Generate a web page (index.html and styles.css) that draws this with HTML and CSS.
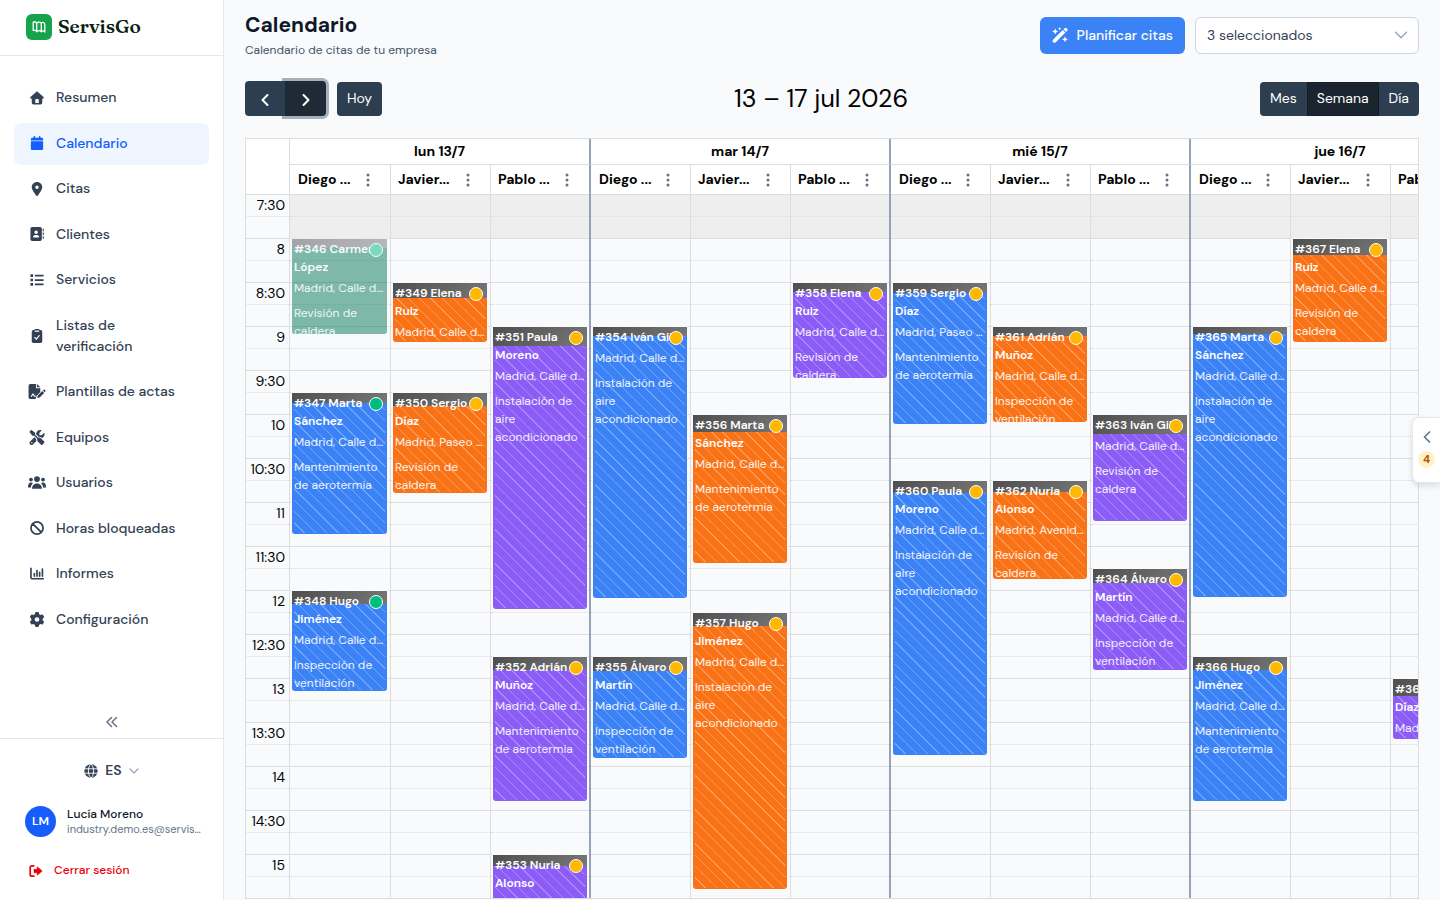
FILE: index.html
```html
<!DOCTYPE html>
<html lang="es">
<head>
    <meta charset="UTF-8">
    <meta name="viewport" content="width=device-width, initial-scale=1.0">
    <title>Calendario - ServisGo</title>
    <link rel="stylesheet" href="styles.css">
</head>
<body>
    <aside class="sidebar">
        <div class="brand">
            <span class="brand-mark">
                <svg width="14" height="14" viewBox="0 0 14 14" fill="none" stroke="#fff" stroke-width="1.300" stroke-linejoin="round" stroke-linecap="round"><path d="M1.200 2.200v8.300c1-.6 2.200-.4 3.500 1.300 1.300-1.500 3-1.500 4.600 0 .9-1.200 2-1.500 3.500.2V4C11.500 2 10.500 2 9.300 3.300 7.700 1.800 6 1.800 4.700 3.300 3.500 1.600 2.200 1.500 1.200 2.200ZM4.700 3.300v8.500M9.300 3.300v8.500"/></svg>
            </span>
            <span class="brand-name">ServisGo</span>
        </div>

        <nav class="nav">
            <ul class="nav-list">
                <li><a class="nav-item" href="#">
                    <svg class="icon" viewBox="0 0 16 16"><path fill-rule="evenodd" d="M8 .6c.4 0 .7.1 1 .4l6.4 5.8c.8.8.4 1.8-.5 1.8H14v4.9a2 2 0 0 1-2 2H4a2 2 0 0 1-2-2V8.600h-.9C.2 8.600-.2 7.600.6 6.800L7 1c.3-.3.6-.4 1-.4ZM7 9.200a1 1 0 0 0-1 1v3.600h4v-3.600a1 1 0 0 0-1-1Z"/></svg>
                    Resumen</a></li>
                <li><a class="nav-item active" href="#">
                    <svg class="icon" viewBox="0 0 448 512"><path d="M96 32V64H48C21.500 64 0 85.500 0 112v48H448V112c0-26.500-21.500-48-48-48H352V32c0-17.700-14.300-32-32-32s-32 14.300-32 32V64H160V32c0-17.700-14.300-32-32-32S96 14.300 96 32zM448 192H0V464c0 26.500 21.500 48 48 48H400c26.500 0 48-21.500 48-48V192z"/></svg>
                    Calendario</a></li>
                <li><a class="nav-item" href="#">
                    <svg class="icon" viewBox="0 0 384 512"><path d="M215.700 499.200C267 435 384 279.400 384 192C384 86 298 0 192 0S0 86 0 192c0 87.400 117 243 168.300 307.200c12.300 15.300 35.100 15.300 47.400 0zM192 128a64 64 0 1 1 0 128 64 64 0 1 1 0-128z"/></svg>
                    Citas</a></li>
                <li><a class="nav-item" href="#">
                    <svg class="icon" viewBox="0 0 512 512"><path d="M80 0C45 0 16 28.700 16 64V448c0 35.300 29 64 64 64H368c35.300 0 64-28.700 64-64V64c0-35.300-28.700-64-64-64H80zM192 288h64c44.200 0 80 35.800 80 80c0 8.800-7.200 16-16 16H128c-8.800 0-16-7.200-16-16c0-44.200 35.800-80 80-80zm-32-96a64 64 0 1 1 128 0 64 64 0 1 1-128 0z"/><path d="M464 64h40v90h-40zM464 200h40v90h-40zM464 336h40v90h-40z"/></svg>
                    Clientes</a></li>
                <li><a class="nav-item" href="#">
                    <svg class="icon" viewBox="0 0 16 16"><path d="M.5 1.500h3v3h-3zM.5 6.500h3v3h-3zM.5 11.500h3v3h-3zM5.500 2h10v2h-10zM5.500 7h10v2h-10zM5.500 12h10v2h-10z"/></svg>
                    Servicios</a></li>
                <li><a class="nav-item" href="#">
                    <svg class="icon" viewBox="0 0 12 16"><rect y="1" width="12" height="15" rx="2"/><rect x="3" width="6" height="4" rx="1"/><path d="M4 2.500h4M3.500 9.700l1.800 1.800 3.200-4" fill="none" stroke="#fff" stroke-width="1.300" stroke-linecap="round"/></svg>
                    Listas de verificación</a></li>
                <li><a class="nav-item" href="#">
                    <svg class="icon wide" viewBox="0 0 18 16"><path d="M2 0h6v4.500h4.500v4L8.500 12.500 7.500 16H2a2 2 0 0 1-2-2V2a2 2 0 0 1 2-2ZM9 0l3.500 3.500H9z"/><path d="M9.800 12.300 14.600 7.500l2 2-4.800 4.800-2.600.6zM15.300 6.800l.8-.8c.8-.6 2.500 1 1.900 1.900l-.8.900z"/><path d="M2.500 13.300c1.200 0 1.300-2.600 2.300-2.600.8 0 .6 2.300 1.800 2.300h1.200" fill="none" stroke="#fff" stroke-width="1.200"/></svg>
                    Plantillas de actas</a></li>
                <li><a class="nav-item" href="#">
                    <svg class="icon wide" viewBox="0 0 512 512"><path d="M78.600 5C69.100-2.400 55.600-1.500 47 7L7 47c-8.500 8.500-9.400 22-2.100 31.600l80 104c4.500 5.900 11.600 9.400 19 9.400h54.100l109 109c-14.700 29-10 65.400 14.300 89.600l112 112c12.500 12.500 32.800 12.500 45.300 0l64-64c12.500-12.500 12.500-32.800 0-45.300l-112-112c-24.200-24.200-60.600-29-89.600-14.300l-109-109V104c0-7.500-3.500-14.500-9.400-19L78.600 5zM19.900 396.100C7.200 408.800 0 426.100 0 444.100C0 481.600 30.400 512 67.900 512c18 0 35.300-7.200 48-19.900L233.700 374.300c-7.800-20.900-9-43.600-3.600-65.100l-61.700-61.700L19.900 396.100zM512 144c0-10.500-1.100-20.700-3.200-30.500c-2.400-11.200-16.100-14.100-24.200-6l-63.900 63.900c-3 3-7.100 4.700-11.300 4.700H352c-8.800 0-16-7.200-16-16V102.600c0-4.200 1.700-8.300 4.700-11.300l63.900-63.900c8.100-8.100 5.200-21.800-6-24.200C388.700 1.100 378.500 0 368 0C288.500 0 224 64.500 224 144l0 .8 85.300 85.300c36-9.100 75.800 .5 104 28.700L429 274.500c49-23 83-72.800 83-130.500zM56 432a24 24 0 1 1 48 0 24 24 0 1 1-48 0z"/></svg>
                    Equipos</a></li>
                <li><a class="nav-item" href="#">
                    <svg class="icon wide" viewBox="0 0 20 16"><circle cx="10" cy="4.200" r="3.200"/><circle cx="3.300" cy="4.800" r="2.100"/><circle cx="16.700" cy="4.800" r="2.100"/><path d="M4.500 15c0-3.500 2-6 5.500-6s5.500 2.500 5.500 6zM0 13c0-3 1-5 3.500-5 .9 0 1.500.3 2 .7C4 10 3.300 11.500 3.300 13.500H0zM20 13c0-3-1-5-3.500-5-.9 0-1.500.3-2 .7 1.500 1.300 2.200 2.800 2.200 4.800H20z"/></svg>
                    Usuarios</a></li>
                <li><a class="nav-item" href="#">
                    <svg class="icon" viewBox="0 0 16 16"><path d="M8 1.100a6.900 6.900 0 1 1 0 13.800 6.900 6.900 0 0 1 0-13.800ZM3.200 3.200l9.600 9.600" fill="none" stroke="currentColor" stroke-width="2"/></svg>
                    Horas bloqueadas</a></li>
                <li><a class="nav-item" href="#">
                    <svg class="icon" viewBox="0 0 16 16"><path d="M1.100 1.500v10.600a1.300 1.300 0 0 0 1.300 1.300H15.200M5 10.500V7.500M8 10.500V4M11 10.500V6M14.200 10.500V2.500" fill="none" stroke="currentColor" stroke-width="1.900" stroke-linecap="round"/></svg>
                    Informes</a></li>
                <li><a class="nav-item" href="#">
                    <svg class="icon wide" viewBox="0 0 512 512"><path d="M495.900 166.600c3.200 8.700 .5 18.400-6.400 24.600l-43.300 39.400c1.100 8.300 1.700 16.800 1.700 25.400s-.6 17.100-1.700 25.400l43.300 39.400c6.900 6.200 9.600 15.900 6.400 24.600c-4.400 11.900-9.700 23.300-15.800 34.300l-4.700 8.100c-6.600 11-14 21.400-22.100 31.200c-5.900 7.200-15.700 9.600-24.500 6.800l-55.700-17.700c-13.400 10.300-28.200 18.900-44 25.400l-12.500 57.100c-2 9.100-9 16.300-18.200 17.800c-13.800 2.300-28 3.500-42.500 3.500s-28.700-1.200-42.500-3.500c-9.200-1.500-16.200-8.700-18.200-17.800l-12.500-57.100c-15.800-6.500-30.600-15.100-44-25.400L83.100 425.900c-8.800 2.800-18.600 .3-24.500-6.800c-8.100-9.800-15.500-20.200-22.100-31.200l-4.700-8.100c-6.100-11-11.400-22.400-15.800-34.300c-3.200-8.700-.5-18.400 6.400-24.600l43.300-39.400C64.600 273.100 64 264.600 64 256s.6-17.100 1.700-25.400L22.400 191.200c-6.900-6.200-9.600-15.900-6.400-24.600c4.400-11.900 9.700-23.300 15.800-34.300l4.700-8.100c6.600-11 14-21.400 22.100-31.200c5.900-7.200 15.700-9.600 24.500-6.800l55.700 17.700c13.400-10.300 28.200-18.900 44-25.400l12.500-57.100c2-9.100 9-16.300 18.200-17.800C227.300 1.200 241.500 0 256 0s28.700 1.200 42.500 3.500c9.200 1.500 16.200 8.700 18.200 17.800l12.500 57.100c15.800 6.500 30.600 15.100 44 25.400l55.700-17.700c8.800-2.800 18.600-.3 24.500 6.800c8.100 9.800 15.500 20.200 22.100 31.200l4.700 8.100c6.100 11 11.400 22.400 15.800 34.300zM256 336a80 80 0 1 0 0-160 80 80 0 1 0 0 160z"/></svg>
                    Configuración</a></li>
            </ul>
        </nav>

        <button class="collapse" type="button" aria-label="Contraer menú">
            <svg width="12" height="12" viewBox="0 0 12 12" fill="none" stroke="currentColor" stroke-width="1.500" stroke-linecap="round" stroke-linejoin="round"><path d="M5.500 1.500 1 6l4.500 4.500M10.500 1.500 6 6l4.500 4.500"/></svg>
        </button>

        <div class="sidebar-footer">
            <button class="language" type="button">
                <svg width="14" height="14" viewBox="0 0 14 14"><circle cx="7" cy="7" r="6.700" fill="currentColor"/><path d="M0 4.800h14M0 9.200h14M7 0C3.500 3 3.500 11 7 14M7 0c3.500 3 3.500 11 0 14" fill="none" stroke="#fff" stroke-width=".9"/></svg>
                <span>ES</span>
                <svg class="muted" width="10" height="10" viewBox="0 0 10 10" fill="none" stroke="currentColor" stroke-width="1.200" stroke-linecap="round"><path d="M1 3l4 4 4-4"/></svg>
            </button>
            <div class="user">
                <span class="avatar">LM</span>
                <div class="user-text">
                    <div class="user-name">Lucía Moreno</div>
                    <div class="user-mail">industry.demo.es@servis…</div>
                </div>
            </div>
            <a class="logout" href="#">
                <svg width="14" height="14" viewBox="0 0 14 14"><path d="M4.800 1.800H3A1.800 1.800 0 0 0 1.200 3.600v6.800A1.800 1.800 0 0 0 3 12.200h1.800" fill="none" stroke="currentColor" stroke-width="1.700" stroke-linecap="round"/><path d="M8.200 2.800 13.200 7l-5 4.200V8.700H5V5.300h3.200z" fill="currentColor" stroke="currentColor" stroke-width=".6" stroke-linejoin="round"/></svg>
                Cerrar sesión
            </a>
        </div>
    </aside>

    <main class="main">
        <header class="page-header">
            <div>
                <h1>Calendario</h1>
                <p class="subtitle">Calendario de citas de tu empresa</p>
            </div>
            <div class="actions">
                <button class="btn-primary" type="button">
                    <svg width="16" height="16" viewBox="0 0 16 16" fill="#fff"><path d="M1.200 12.600 10.800 3l2.600 2.600L3.800 15.200a1.800 1.800 0 0 1-2.600-2.600ZM11.500 2.300l.9-.9a1.800 1.800 0 0 1 2.600 2.600l-.9.900z"/><path d="M3.200 1.500l.9 2.100 2.100.9-2.100.9-.9 2.100-.9-2.100-2.100-.9 2.100-.9zM13 9.300l.9 2.100 2.100.9-2.100.9-.9 2.100-.9-2.100-2.100-.9 2.100-.9zM7.700 0l.5 1.200 1.200.5-1.200.5-.5 1.200-.5-1.200L6 1.700l1.200-.5z"/></svg>
                    Planificar citas
                </button>
                <button class="picker" type="button">
                    3 seleccionados
                    <svg width="14" height="14" viewBox="0 0 14 14" fill="none" stroke="#94a3b8" stroke-width="1.400" stroke-linecap="round" stroke-linejoin="round"><path d="M1.500 4.200 7 9.700l5.500-5.500"/></svg>
                </button>
            </div>
        </header>

        <div class="toolbar">
            <div class="toolbar-side">
                <div class="btn-group">
                    <button class="fc-btn arrow" type="button" aria-label="Anterior"><svg width="10" height="14" viewBox="0 0 10 14"><path d="M7.500 2 2.500 7l5 5"/></svg></button>
                    <button class="fc-btn arrow focused" type="button" aria-label="Siguiente"><svg width="10" height="14" viewBox="0 0 10 14"><path d="M2.500 2l5 5-5 5"/></svg></button>
                </div>
                <button class="fc-btn" type="button">Hoy</button>
            </div>
            <h2>13 – 17 jul 2026</h2>
            <div class="btn-group">
                <button class="fc-btn" type="button">Mes</button>
                <button class="fc-btn selected" type="button">Semana</button>
                <button class="fc-btn" type="button">Día</button>
            </div>
        </div>

        <section class="calendar">
            <div class="axis">
                <div class="axis-head"></div>
                <div id="axisSlots"></div>
            </div>
            <div class="days" id="days"></div>
        </section>
    </main>

    <button class="drawer" type="button" aria-label="Citas pendientes">
        <svg width="8" height="12" viewBox="0 0 8 12" fill="none" stroke="#64748b" stroke-width="1.700" stroke-linecap="round" stroke-linejoin="round"><path d="M6.500 1 1.500 6l5 5"/></svg>
        <span class="drawer-count">4</span>
    </button>

    <script src="script.js"></script>
</body>
</html>
```
FILE: styles.css
```css
* {
    box-sizing: border-box;
}
body {
    margin: 0;
    display: flex;
    height: 100vh;
    overflow: hidden;
    font-family: "DM Sans", "Open Sans", "Liberation Sans", sans-serif;
    font-size: 14px;
    line-height: 21px;
    color: #000;
    background-color: #f8fafc;
}
button {
    font: inherit;
    cursor: pointer;
}
h1, h2, p, ul {
    margin: 0;
    padding: 0;
}
a {
    text-decoration: none;
}

/* Sidebar */
.sidebar {
    flex: 0 0 224px;
    display: flex;
    flex-direction: column;
    background-color: #fff;
    border-right: 1px solid #e2e8f0;
}
.brand {
    display: flex;
    align-items: center;
    gap: 6px;
    height: 56px;
    padding: 0 26px 2px;
    border-bottom: 1px solid #e5e7eb;
}
.brand-mark {
    display: flex;
    align-items: center;
    justify-content: center;
    width: 26px;
    height: 26px;
    border-radius: 6px;
    background-color: #16a34a;
}
.brand-name {
    font-family: Fraunces, "Liberation Serif", serif;
    font-size: 19px;
    font-weight: 600;
    color: #0a1f14;
}
.nav {
    flex: 1;
    padding: 21px 14px;
}
.nav-list {
    display: flex;
    flex-direction: column;
    justify-content: space-between;
    min-height: 564px;
    list-style: none;
}
.nav-item {
    display: flex;
    align-items: center;
    gap: 10px;
    padding: 10px 32px 11px 14px;
    border-radius: 7px;
    font-weight: 500;
    color: #334155;
}
.nav-item.active {
    color: #155dfc;
    background-color: #eff6ff;
}
.icon {
    flex: none;
    width: 18px;
    height: 14px;
    fill: currentColor;
}
.icon.wide {
    height: 15px;
}
.collapse {
    display: flex;
    justify-content: center;
    padding: 10px 0;
    border: none;
    background: none;
    color: #64748b;
}
.sidebar-footer {
    padding: 21px 14px 19px;
    border-top: 1px solid #e2e8f0;
}
.language {
    display: flex;
    align-items: center;
    gap: 7px;
    margin: 0 auto;
    padding: 0;
    border: none;
    background: none;
    font-weight: 600;
    color: #334155;
}
.muted {
    color: #94a3b8;
}
.user {
    display: flex;
    align-items: center;
    gap: 11px;
    padding: 25px 0 23px 11px;
}
.avatar {
    flex: none;
    width: 31px;
    height: 31px;
    border-radius: 50%;
    background-color: #155dfc;
    color: #fff;
    font-size: 12px;
    font-weight: 600;
    line-height: 31px;
    text-align: center;
}
.user-text {
    padding-bottom: 1px;
}
.user-name {
    font-size: 12px;
    font-weight: 500;
    line-height: 16px;
    color: #0f172a;
}
.user-mail {
    font-size: 11px;
    line-height: 14px;
    color: #64748b;
    white-space: nowrap;
}
.logout {
    display: flex;
    align-items: center;
    gap: 11px;
    padding-left: 15px;
    font-size: 12px;
    font-weight: 500;
    color: #e7000b;
}

/* Page header */
.main {
    flex: 1;
    min-width: 0;
    padding: 10px 21px 0;
}
.page-header {
    display: flex;
    justify-content: space-between;
    align-items: center;
}
h1 {
    font-size: 21px;
    font-weight: 700;
    line-height: 30px;
    color: #0f172a;
}
.subtitle {
    font-size: 12px;
    line-height: 20px;
    color: #475569;
}
.actions {
    display: flex;
    gap: 10px;
}
.btn-primary {
    display: flex;
    align-items: center;
    gap: 9px;
    height: 37px;
    padding: 0 12px;
    border: none;
    border-radius: 6px;
    background-color: #3b82f6;
    color: #fff;
    font-weight: 500;
}
.picker {
    display: flex;
    align-items: center;
    justify-content: space-between;
    width: 224px;
    height: 37px;
    padding: 0 10px 0 11px;
    border: 1px solid #cbd5e1;
    border-radius: 6px;
    background-color: #fff;
    color: #334155;
}

/* Calendar toolbar */
.toolbar {
    display: flex;
    align-items: flex-end;
    justify-content: space-between;
    padding: 21px 0 22px;
}
.toolbar-side {
    display: flex;
    align-items: flex-end;
    gap: 11px;
}
h2 {
    font-size: 25px;
    font-weight: 400;
    line-height: 35px;
}
.btn-group {
    display: flex;
}
.fc-btn {
    height: 34px;
    padding: 0 10px 2px;
    border: none;
    border-radius: 4px;
    background-color: #2c3e50;
    color: #fff;
}
.btn-group .fc-btn:first-child {
    border-radius: 4px 0 0 4px;
}
.btn-group .fc-btn:last-child {
    border-radius: 0 4px 4px 0;
}
.fc-btn.selected {
    padding: 0 9px 2px;
    border: 1px solid #151e27;
    border-radius: 0;
    background-color: #1a252f;
}
.fc-btn.arrow {
    display: flex;
    align-items: center;
    justify-content: center;
    width: 40px;
    height: 35px;
    padding: 3px 10px 0;
}
.fc-btn.focused {
    width: 41px;
    background-color: #1e2b37;
    box-shadow: 0 0 0 3px rgba(44, 62, 80, .4);
}
.arrow path {
    fill: none;
    stroke: #fff;
    stroke-width: 2;
    stroke-linecap: round;
    stroke-linejoin: round;
}

/* Calendar grid */
.calendar {
    display: flex;
    overflow: hidden;
    border: 1px solid #ddd;
}
.axis {
    flex: 0 0 44px;
    border-right: 1px solid #ddd;
    text-align: right;
}
.axis .slot {
    padding-right: 4px;
}
.axis-head {
    height: 55px;
    background-color: #fff;
}
.days {
    flex: 1;
    min-width: 0;
    display: flex;
    overflow: hidden;
}
.day {
    flex: none;
}
.day-head {
    height: 26px;
    line-height: 25px;
    border-right: 2px solid #94a3b8;
    border-bottom: 1px solid #ddd;
    background-color: #fff;
    font-weight: 700;
    text-align: center;
}
.resources {
    display: flex;
}
.resource {
    width: 100px;
    border-right: 1px solid #ddd;
}
.day:first-child .resource:first-child {
    width: 101px;
}
.resource:last-child {
    border-right: 2px solid #94a3b8;
}
.resource-head {
    display: flex;
    align-items: center;
    justify-content: space-between;
    height: 29px;
    padding: 0 20px 0 7px;
    background-color: #fff;
    font-weight: 700;
    white-space: nowrap;
}
.resource:first-child .resource-head {
    padding-left: 8px;
}
.resource-head button {
    display: flex;
    padding: 0;
    border: none;
    background: none;
}
.lane {
    position: relative;
    overflow: hidden;
}
.slot {
    height: 22px;
    border-top: 1px solid #ddd;
}
.slot:nth-child(even) {
    border-top-style: dotted;
}
.slot.closed {
    background-color: #eee;
}

/* Appointments */
.event {
    position: absolute;
    left: 2px;
    right: 3px;
    overflow: hidden;
    padding: 1px 2px;
    border-radius: 0 0 3px 3px;
    box-shadow: 0 0 0 1px #f8fafc;
    font-size: 12px;
    line-height: 18px;
    color: #fff;
}
.resource:last-child .event {
    right: 2px;
}
.event.blue {
    background-color: #3b82f6;
}
.event.orange {
    background-color: #f97316;
}
.event.violet {
    background-color: #8b5cf6;
}
.event.past {
    background-color: #047857;
    opacity: .5;
}
.event::before {
    content: "";
    position: absolute;
    inset: 1px 2px;
    background: repeating-linear-gradient(45deg, transparent 0 7px, rgba(255, 255, 255, .28) 7px 8px);
}
.event.past::before {
    display: none;
}
.travel {
    position: absolute;
    top: 0;
    left: 0;
    right: 0;
    background: linear-gradient(135deg, #4f4f4f, #777);
}
.event-text {
    position: relative;
}
.event-title {
    font-weight: 600;
}
.event-address {
    margin: 3px 0 7px;
    white-space: nowrap;
    opacity: .9;
}
.event-service {
    opacity: .9;
}
.status {
    position: absolute;
    top: 4px;
    right: 4px;
    width: 14px;
    height: 14px;
    border: 1px solid #fff;
    border-radius: 50%;
    background-color: #ffb900;
}
.status.done {
    background-color: #00bc7d;
}

/* Pending drawer handle */
.drawer {
    position: absolute;
    top: 417px;
    right: 0;
    display: flex;
    flex-direction: column;
    align-items: center;
    gap: 8px;
    width: 28px;
    padding: 13px 0 14px;
    border: 1px solid #e2e8f0;
    border-right: none;
    border-radius: 7px 0 0 7px;
    background-color: #fff;
    box-shadow: 0 3px 6px rgba(0, 0, 0, .12);
}
.drawer-count {
    width: 17px;
    height: 17px;
    border-radius: 50%;
    background-color: #fef3c6;
    color: #bb4d00;
    font-size: 11px;
    font-weight: 700;
    line-height: 17px;
}
```
FILE: script.js
```js
const SLOT_HEIGHT = 22; // 15 minutes
const FIRST_MINUTE = 7 * 60 + 30;
const SLOT_COUNT = 32;

const RESOURCES = ["Diego ...", "Javier...", "Pablo ..."];
const SERVICES = {
    rev: "Revisión de caldera",
    man: "Mantenimiento de aerotermia",
    ins: "Inspección de ventilación",
    aire: "Instalación de aire acondicionado"
};
const COLORS = ["blue", "orange", "violet"];

// [title, start, minutes, travel px, address, service, status]
const DAYS = [
    { label: "lun 13/7", lanes: [
        [["#346 Carmen López", "8:00", 65, 9, "Calle d…", "rev", "past"],
         ["#347 Marta Sánchez", "9:45", 96, 10, "Calle d…", "man", "done"],
         ["#348 Hugo Jiménez", "12:00", 68, 13, "Calle d…", "ins", "done"]],
        [["#349 Elena Ruiz", "8:30", 40, 15, "Calle d…", "rev"],
         ["#350 Sergio Díaz", "9:45", 68, 13, "Paseo …", "rev"]],
        [["#351 Paula Moreno", "9:00", 192, 19, "Calle d…", "aire"],
         ["#352 Adrián Muñoz", "12:45", 98, 13, "Calle d…", "man"],
         ["#353 Nuria Alonso", "15:00", 68, 11, "Avenid…", "rev"]]
    ] },
    { label: "mar 14/7", lanes: [
        [["#354 Iván Gil", "9:00", 185, 9, "Calle d…", "aire"],
         ["#355 Álvaro Martín", "12:45", 69, 14, "Calle d…", "ins"]],
        [["#356 Marta Sánchez", "10:00", 101, 17, "Calle d…", "man"],
         ["#357 Hugo Jiménez", "12:15", 188, 13, "Calle d…", "aire"]],
        [["#358 Elena Ruiz", "8:30", 65, 9, "Calle d…", "rev"]]
    ] },
    { label: "mié 15/7", lanes: [
        [["#359 Sergio Díaz", "8:30", 96, 10, "Paseo …", "man"],
         ["#360 Paula Moreno", "10:45", 187, 12, "Calle d…", "aire"]],
        [["#361 Adrián Muñoz", "9:00", 65, 9, "Calle d…", "ins"],
         ["#362 Nuria Alonso", "10:45", 67, 11, "Avenid…", "rev"]],
        [["#363 Iván Gil", "10:00", 72, 19, "Calle d…", "rev"],
         ["#364 Álvaro Martín", "11:45", 69, 14, "Calle d…", "ins"]]
    ] },
    { label: "jue 16/7", lanes: [
        [["#365 Marta Sánchez", "9:00", 184, 7, "Calle d…", "aire"],
         ["#366 Hugo Jiménez", "12:45", 98, 13, "Calle d…", "man"]],
        [["#367 Elena Ruiz", "8:00", 70, 16, "Calle d…", "rev"]],
        [["#368 Sergio Díaz", "13:00", 41, 17, "Paseo …", "rev"]]
    ] }
];

function toPixels(minutes) {
    return Math.round(minutes * SLOT_HEIGHT / 15);
}

function renderEvent([title, start, minutes, travel, address, service, status = ""], color) {
    const [h, m] = start.split(":").map(Number);
    const top = toPixels(h * 60 + m - FIRST_MINUTE) + 1;
    return `
        <article class="event ${status === "past" ? "past" : color}" style="top:${top}px;height:${toPixels(minutes)}px">
            <div class="travel" style="height:${travel}px"></div>
            <div class="event-text">
                <div class="event-title">${title}</div>
                <div class="event-address">Madrid, ${address}</div>
                <div class="event-service">${SERVICES[service]}</div>
            </div>
            <span class="status ${status ? "done" : ""}"></span>
        </article>`;
}

function renderSlots(withLabels) {
    let html = "";
    for (let i = 0; i < SLOT_COUNT; i++) {
        const minute = FIRST_MINUTE + i * 15;
        const half = minute % 60 === 0 ? "" : ":30";
        const label = withLabels && i % 2 === 0 ? Math.floor(minute / 60) + half : "";
        html += `<div class="slot ${!withLabels && i < 2 ? "closed" : ""}">${label}</div>`;
    }
    return html;
}

const dots = '<svg width="4" height="14" viewBox="0 0 4 14" fill="#64748b"><circle cx="2" cy="2" r="1.5"/><circle cx="2" cy="7" r="1.5"/><circle cx="2" cy="12" r="1.5"/></svg>';

document.getElementById("axisSlots").innerHTML = renderSlots(true);
document.getElementById("days").innerHTML = DAYS.map(day => `
    <div class="day">
        <div class="day-head">${day.label}</div>
        <div class="resources">
            ${day.lanes.map((events, i) => `
                <div class="resource">
                    <div class="resource-head"><span>${RESOURCES[i]}</span><button type="button" aria-label="Opciones">${dots}</button></div>
                    <div class="lane">${renderSlots(false)}${events.map(e => renderEvent(e, COLORS[i])).join("")}</div>
                </div>`).join("")}
        </div>
    </div>`).join("");
```
